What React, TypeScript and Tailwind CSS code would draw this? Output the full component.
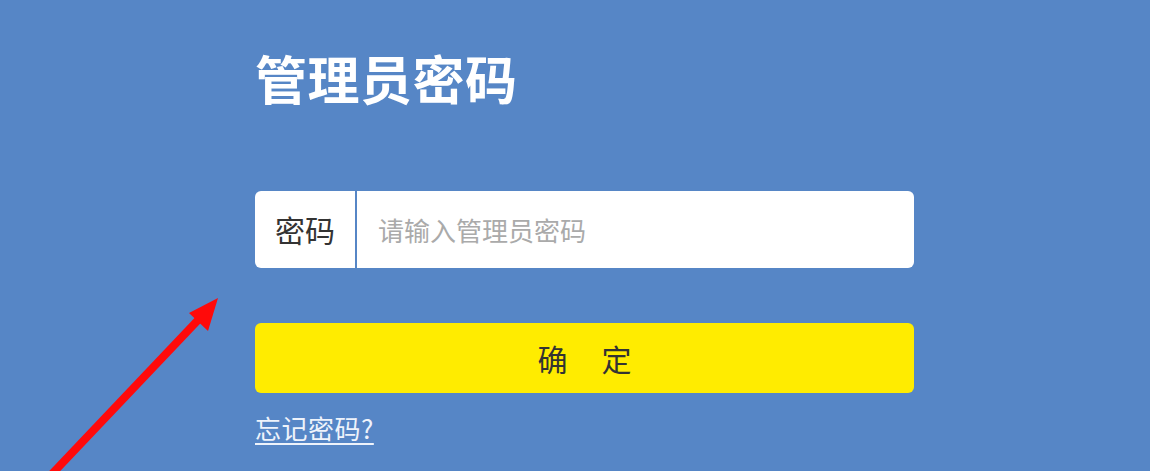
import React from "react";

const font = { fontFamily: '"Noto Sans CJK SC", "Noto Sans", sans-serif' };

function Arrow() {
  return (
    <svg className="absolute left-0 top-0 pointer-events-none" width="1150" height="471" viewBox="0 0 1150 471">
      <line x1="50" y1="476" x2="200" y2="318" stroke="#ff0a0a" strokeWidth="8" />
      <polygon points="218,298 189,313 208,331" fill="#ff0a0a" />
    </svg>
  );
}

export default function App() {
  return (
    <div className="relative w-[1150px] h-[471px] overflow-hidden bg-[#5686c6]" style={font}>
      <div className="pl-[255px] pt-[46px] w-[914px] box-content">
        <h1 className="text-[52px] leading-[64px] font-bold text-white tracking-[0.5px]">管理员密码</h1>

        <div className="mt-[81px] flex h-[77px] w-[659px] rounded-[6px] bg-white overflow-hidden">
          <div className="w-[102px] flex items-center justify-center text-[30px] text-[#333] border-r-2 border-[#5686c6]">
            密码
          </div>
          <div className="flex-1 flex items-center pl-[21px] text-[26px] text-[#aaaaaa]">请输入管理员密码</div>
        </div>

        <button className="mt-[55px] flex h-[70px] w-[659px] items-center justify-center rounded-[6px] bg-[#ffec00] text-[30px] text-[#333]">
          <span>确</span>
          <span className="ml-[34px]">定</span>
        </button>

        <a href="#" className="mt-[19px] inline-block text-[26px] leading-[32px] text-[#eef3fb] underline underline-offset-[4px] tracking-[0.5px]">
          忘记密码?
        </a>
      </div>
      <Arrow />
    </div>
  );
}
